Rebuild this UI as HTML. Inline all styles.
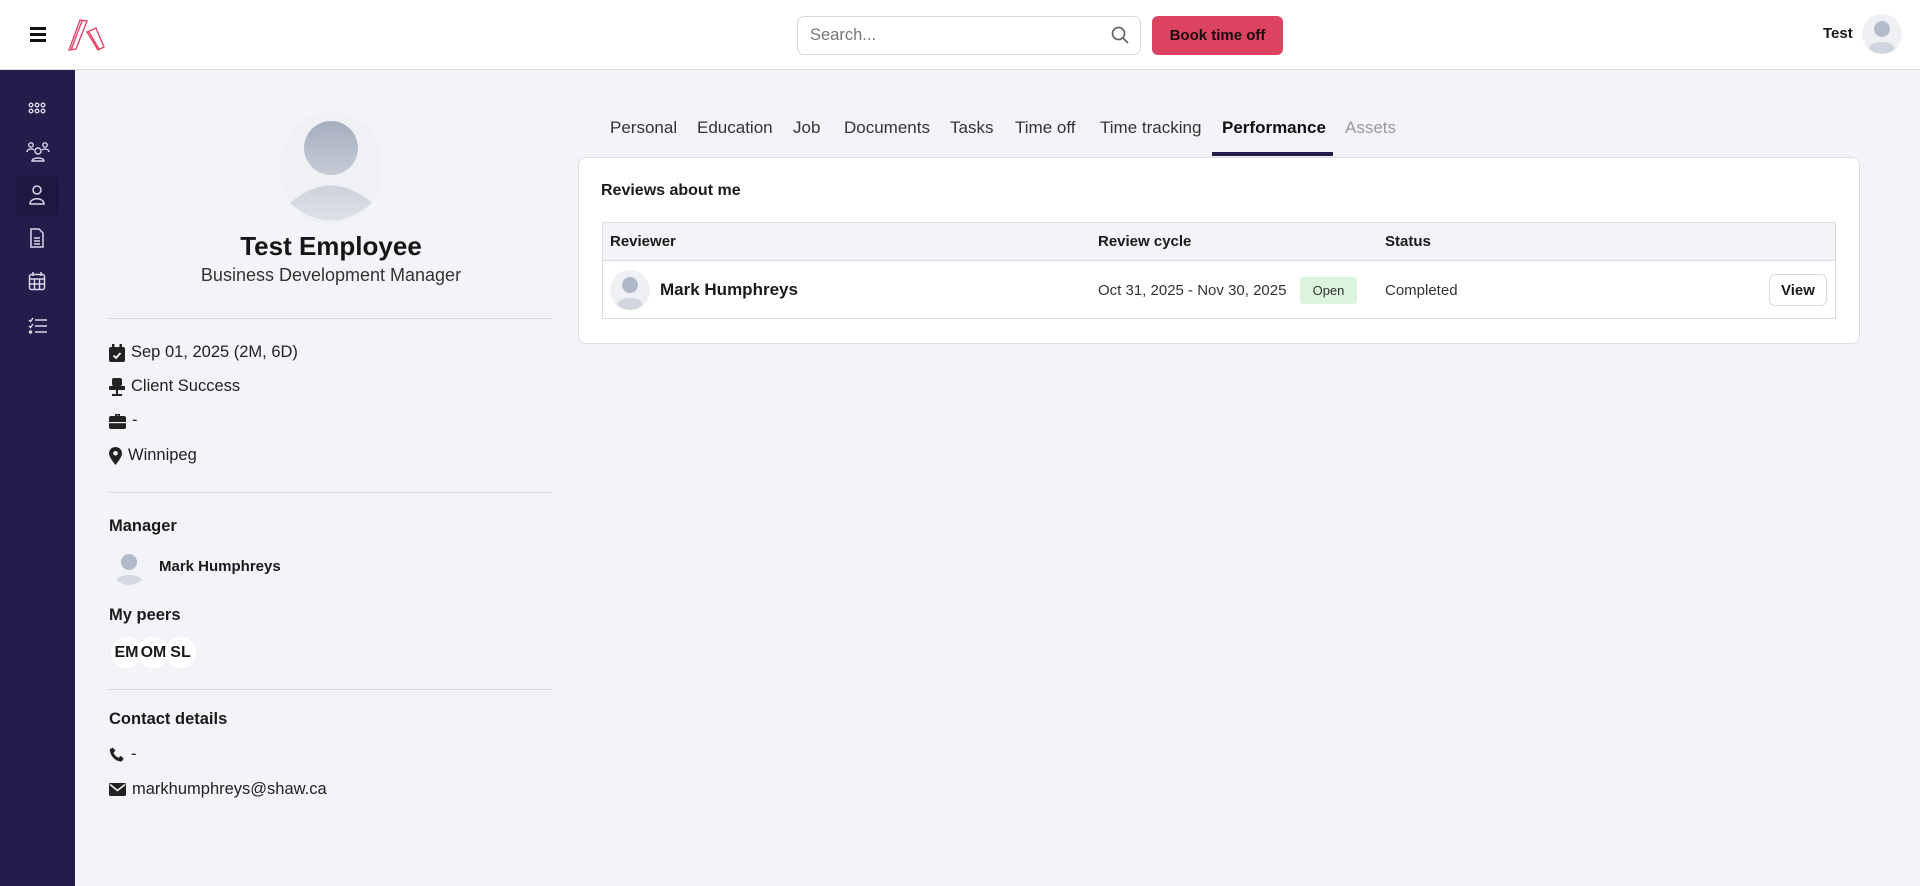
<!DOCTYPE html>
<html><head><meta charset="utf-8"><style>
*{box-sizing:border-box;margin:0;padding:0}
body{width:1920px;height:886px;overflow:hidden;background:#f3f4f8;font-family:"Liberation Sans",Arial,sans-serif;color:#1a1a1a;position:relative}
.abs{position:absolute}
.hdr{left:0;top:0;width:1920px;height:70px;background:#fff;border-bottom:1px solid #dcdde3}
.side{left:0;top:70px;width:75px;height:816px;background:#221d4b}
.txt{white-space:nowrap}
.tab{top:118px;font-size:17px;color:#333}
.av{border-radius:50%;background:#eef0f4;overflow:hidden}
.row{font-size:16.5px;color:#222;display:flex;align-items:center;gap:6px}
.hr{left:109px;width:444px;height:1px;background:#d6d8de}
.h3{font-size:16.5px;font-weight:bold;left:109px}
.peer{width:31px;height:31px;border-radius:50%;background:#fff;font-weight:bold;font-size:16px;display:flex;align-items:center;justify-content:center;top:637px;overflow:hidden}
</style></head><body>
<div class="abs hdr"></div>
<div class="abs" style="left:30px;top:27px;width:16px;height:3px;background:#111"></div>
<div class="abs" style="left:30px;top:33px;width:16px;height:3px;background:#111"></div>
<div class="abs" style="left:30px;top:39px;width:16px;height:3px;background:#111"></div>
<svg class="abs" style="left:68px;top:18px" width="38" height="34" viewBox="0 0 38 34" fill="none" stroke="#e8456a" stroke-width="1.4"><path d="M1 32 L12 2 L19 3 L8 31 Z M3 32 L14 3"/><path d="M19 14 L28 10 L36 29 L30 32 Z M21 14 L31 31"/></svg>
<div class="abs" style="left:797px;top:16px;width:344px;height:39px;border:1px solid #d9dadf;border-radius:7px;background:#fff"></div>
<div class="abs txt" style="left:810px;top:26px;font-size:16.5px;color:#777">Search...</div>
<svg class="abs" style="left:1110px;top:25px" width="20" height="20" viewBox="0 0 20 20" fill="none" stroke="#666" stroke-width="1.7"><circle cx="8.5" cy="8.5" r="6"/><path d="M13 13 L18 18"/></svg>
<div class="abs" style="left:1152px;top:16px;width:131px;height:39px;background:#dc4360;border-radius:6px;font-weight:bold;font-size:15px;color:#1a0a0e;display:flex;align-items:center;justify-content:center">Book time off</div>
<div class="abs txt" style="left:1823px;top:25px;font-weight:bold;font-size:15px">Test</div>
<div class="abs av" style="left:1862px;top:14px;width:40px;height:40px"><svg width="40" height="40"><circle cx="20" cy="15" r="8" fill="#b3bccb"/><ellipse cx="20" cy="35" rx="13" ry="7" fill="#cfd5de"/></svg></div>
<div class="abs side"></div>
<div class="abs" style="left:16px;top:176px;width:43px;height:40px;background:#1c1842;border-radius:4px"></div>
<svg class="abs" style="left:27px;top:100px" width="20" height="16" viewBox="0 0 20 16" fill="none" stroke="#d8d8e8" stroke-width="1.4"><circle cx="4" cy="5" r="1.8"/><circle cx="10" cy="5" r="1.8"/><circle cx="16" cy="5" r="1.8"/><circle cx="4" cy="11" r="1.8"/><circle cx="10" cy="11" r="1.8"/><circle cx="16" cy="11" r="1.8"/></svg>
<svg class="abs" style="left:26px;top:141px" width="24" height="22" viewBox="0 0 24 22" fill="none" stroke="#d8d8e8" stroke-width="1.4"><circle cx="12" cy="10" r="3"/><path d="M6 20c0-4 12-4 12 0z"/><circle cx="5" cy="4" r="2.2"/><circle cx="19" cy="4" r="2.2"/><path d="M1 11c0-3 5-4 7-2M23 11c0-3-5-4-7-2"/></svg>
<svg class="abs" style="left:28px;top:184px" width="18" height="22" viewBox="0 0 18 22" fill="none" stroke="#d8d8e8" stroke-width="1.5"><circle cx="9" cy="6" r="4"/><path d="M2 20c0-7 14-7 14 0z"/></svg>
<svg class="abs" style="left:29px;top:228px" width="16" height="20" viewBox="0 0 16 20" fill="none" stroke="#d8d8e8" stroke-width="1.5"><path d="M2 1h8l4 4v14H2z"/><path d="M5 10h6M5 13h6M5 16h6"/></svg>
<svg class="abs" style="left:28px;top:271px" width="18" height="20" viewBox="0 0 18 20" fill="none" stroke="#d8d8e8" stroke-width="1.5"><rect x="1.5" y="3.5" width="15" height="15" rx="2"/><path d="M5 1v4M13 1v4M1.5 8h15M6.5 8v10M11.5 8v10M1.5 13h15"/></svg>
<svg class="abs" style="left:28px;top:317px" width="20" height="18" viewBox="0 0 20 18" fill="none" stroke="#d8d8e8" stroke-width="1.5"><path d="M7 3h12M7 9h12M7 15h12M1 3l1.5 1.5L5 1M1 9l1.5 1.5L5 7"/><circle cx="2.5" cy="15" r="1"/></svg>
<div class="abs av" style="left:281px;top:112px;width:100px;height:112px;border-radius:50px;background:#f0f1f5"><svg width="100" height="112"><defs><linearGradient id="g" x1="0" y1="0" x2="0" y2="1"><stop offset="0" stop-color="#a4aebe"/><stop offset="1" stop-color="#c6ccd6"/></linearGradient><linearGradient id="g2" x1="0" y1="0" x2="0" y2="1"><stop offset="0" stop-color="#cdd2db"/><stop offset="1" stop-color="#dde1e7"/></linearGradient></defs><circle cx="50" cy="36" r="27" fill="url(#g)"/><path d="M9 91 Q50 56 91 91 Q50 126 9 91 Z" fill="url(#g2)"/></svg></div>
<div class="abs txt" style="left:131px;width:400px;text-align:center;top:231px;font-size:26px;font-weight:bold;color:#161616">Test Employee</div>
<div class="abs txt" style="left:131px;width:400px;text-align:center;top:265px;font-size:18px;color:#333">Business Development Manager</div>
<div class="abs hr" style="top:318px"></div>
<div class="abs row" style="left:109px;top:343px"><svg width="16" height="18" viewBox="0 0 16 18"><rect x="0" y="3" width="16" height="15" rx="2" fill="#222"/><rect x="3" y="0" width="2.5" height="5" fill="#222"/><rect x="10.5" y="0" width="2.5" height="5" fill="#222"/><path d="M4.5 11.5l2.5 2.5 4.5-5" stroke="#fff" stroke-width="1.8" fill="none"/></svg>Sep 01, 2025 (2M, 6D)</div>
<div class="abs row" style="left:109px;top:377px"><svg width="16" height="18" viewBox="0 0 16 18" fill="#222"><rect x="3" y="0" width="10" height="8" rx="2"/><rect x="0" y="8" width="16" height="4" rx="1"/><rect x="7" y="12" width="2" height="4"/><rect x="3" y="16" width="10" height="2"/></svg>Client Success</div>
<div class="abs row" style="left:109px;top:411px"><svg width="17" height="16" viewBox="0 0 17 16" fill="#222"><path d="M6 1h5v2h-1.5V2.5h-2V3H6z"/><rect x="0" y="3" width="17" height="13" rx="2"/><rect x="0" y="9" width="17" height="1.2" fill="#f3f4f8"/></svg>-</div>
<div class="abs row" style="left:109px;top:446px"><svg width="13" height="18" viewBox="0 0 13 18"><path d="M6.5 0C3 0 0 2.7 0 6.3 0 10.5 6.5 18 6.5 18S13 10.5 13 6.3C13 2.7 10 0 6.5 0z" fill="#222"/><circle cx="6.5" cy="6.3" r="2.3" fill="#f3f4f8"/></svg>Winnipeg</div>
<div class="abs hr" style="top:492px"></div>
<div class="abs h3 txt" style="top:517px">Manager</div>
<div class="abs av" style="left:111px;top:549px;width:36px;height:36px;background:#f3f4f8"><svg width="36" height="36"><circle cx="18" cy="13" r="8" fill="#b0bac8"/><ellipse cx="18" cy="32" rx="13" ry="6" fill="#d4d9e1"/></svg></div>
<div class="abs txt" style="left:159px;top:558px;font-size:15px;font-weight:bold">Mark Humphreys</div>
<div class="abs h3 txt" style="top:606px">My peers</div>
<div class="abs peer" style="left:111px">EM</div>
<div class="abs peer" style="left:138px">OM</div>
<div class="abs peer" style="left:165px">SL</div>
<div class="abs hr" style="top:689px"></div>
<div class="abs h3 txt" style="top:710px">Contact details</div>
<div class="abs row" style="left:109px;top:745px"><svg width="16" height="16" viewBox="0 0 16 16"><path d="M3.5 0.5l3 3-2 2.2c1 2.3 2.7 4 5 5l2.2-2 3 3-2 2.8C6.5 14.5 1.5 9.5 0.7 2.5z" fill="#222"/></svg>-</div>
<div class="abs row" style="left:109px;top:780px"><svg width="17" height="13" viewBox="0 0 17 13"><rect width="17" height="13" rx="1.5" fill="#222"/><path d="M1 1.5l7.5 6 7.5-6" stroke="#f3f4f8" stroke-width="1.5" fill="none"/></svg>markhumphreys@shaw.ca</div>
<div class="abs tab txt" style="left:610px">Personal</div>
<div class="abs tab txt" style="left:697px">Education</div>
<div class="abs tab txt" style="left:793px">Job</div>
<div class="abs tab txt" style="left:844px">Documents</div>
<div class="abs tab txt" style="left:950px">Tasks</div>
<div class="abs tab txt" style="left:1015px">Time off</div>
<div class="abs tab txt" style="left:1100px">Time tracking</div>
<div class="abs tab txt" style="left:1222px;font-weight:bold;color:#111">Performance</div>
<div class="abs tab txt" style="left:1345px;color:#9a9a9a">Assets</div>
<div class="abs" style="left:1212px;top:152px;width:121px;height:4px;background:#221d4b"></div>
<div class="abs" style="left:578px;top:157px;width:1282px;height:187px;background:#fff;border:1px solid #dcdde3;border-radius:8px"></div>
<div class="abs txt" style="left:601px;top:182px;font-size:16px;font-weight:bold">Reviews about me</div>
<div class="abs" style="left:602px;top:222px;width:1234px;height:97px;border:1px solid #dcdde3"></div>
<div class="abs" style="left:603px;top:223px;width:1232px;height:38px;background:#f3f4f8;border-bottom:1px solid #dcdde3"></div>
<div class="abs txt" style="left:610px;top:233px;font-size:15px;font-weight:bold">Reviewer</div>
<div class="abs txt" style="left:1098px;top:233px;font-size:15px;font-weight:bold">Review cycle</div>
<div class="abs txt" style="left:1385px;top:233px;font-size:15px;font-weight:bold">Status</div>
<div class="abs av" style="left:610px;top:270px;width:40px;height:40px;background:#eef0f4"><svg width="40" height="40"><circle cx="20" cy="15" r="8" fill="#aeb8c6"/><ellipse cx="20" cy="35" rx="13" ry="7" fill="#d2d7df"/></svg></div>
<div class="abs txt" style="left:660px;top:280px;font-size:17px;font-weight:bold">Mark Humphreys</div>
<div class="abs txt" style="left:1098px;top:282px;font-size:15px;color:#333">Oct 31, 2025 - Nov 30, 2025</div>
<div class="abs" style="left:1300px;top:277px;width:57px;height:27px;background:#dcf4dc;border-radius:3px;font-size:13px;color:#333;display:flex;align-items:center;justify-content:center">Open</div>
<div class="abs txt" style="left:1385px;top:282px;font-size:15px;color:#333">Completed</div>
<div class="abs" style="left:1769px;top:274px;width:58px;height:32px;border:1px solid #d9dadf;border-radius:6px;background:#fff;font-size:15px;font-weight:bold;display:flex;align-items:center;justify-content:center">View</div>
</body></html>
